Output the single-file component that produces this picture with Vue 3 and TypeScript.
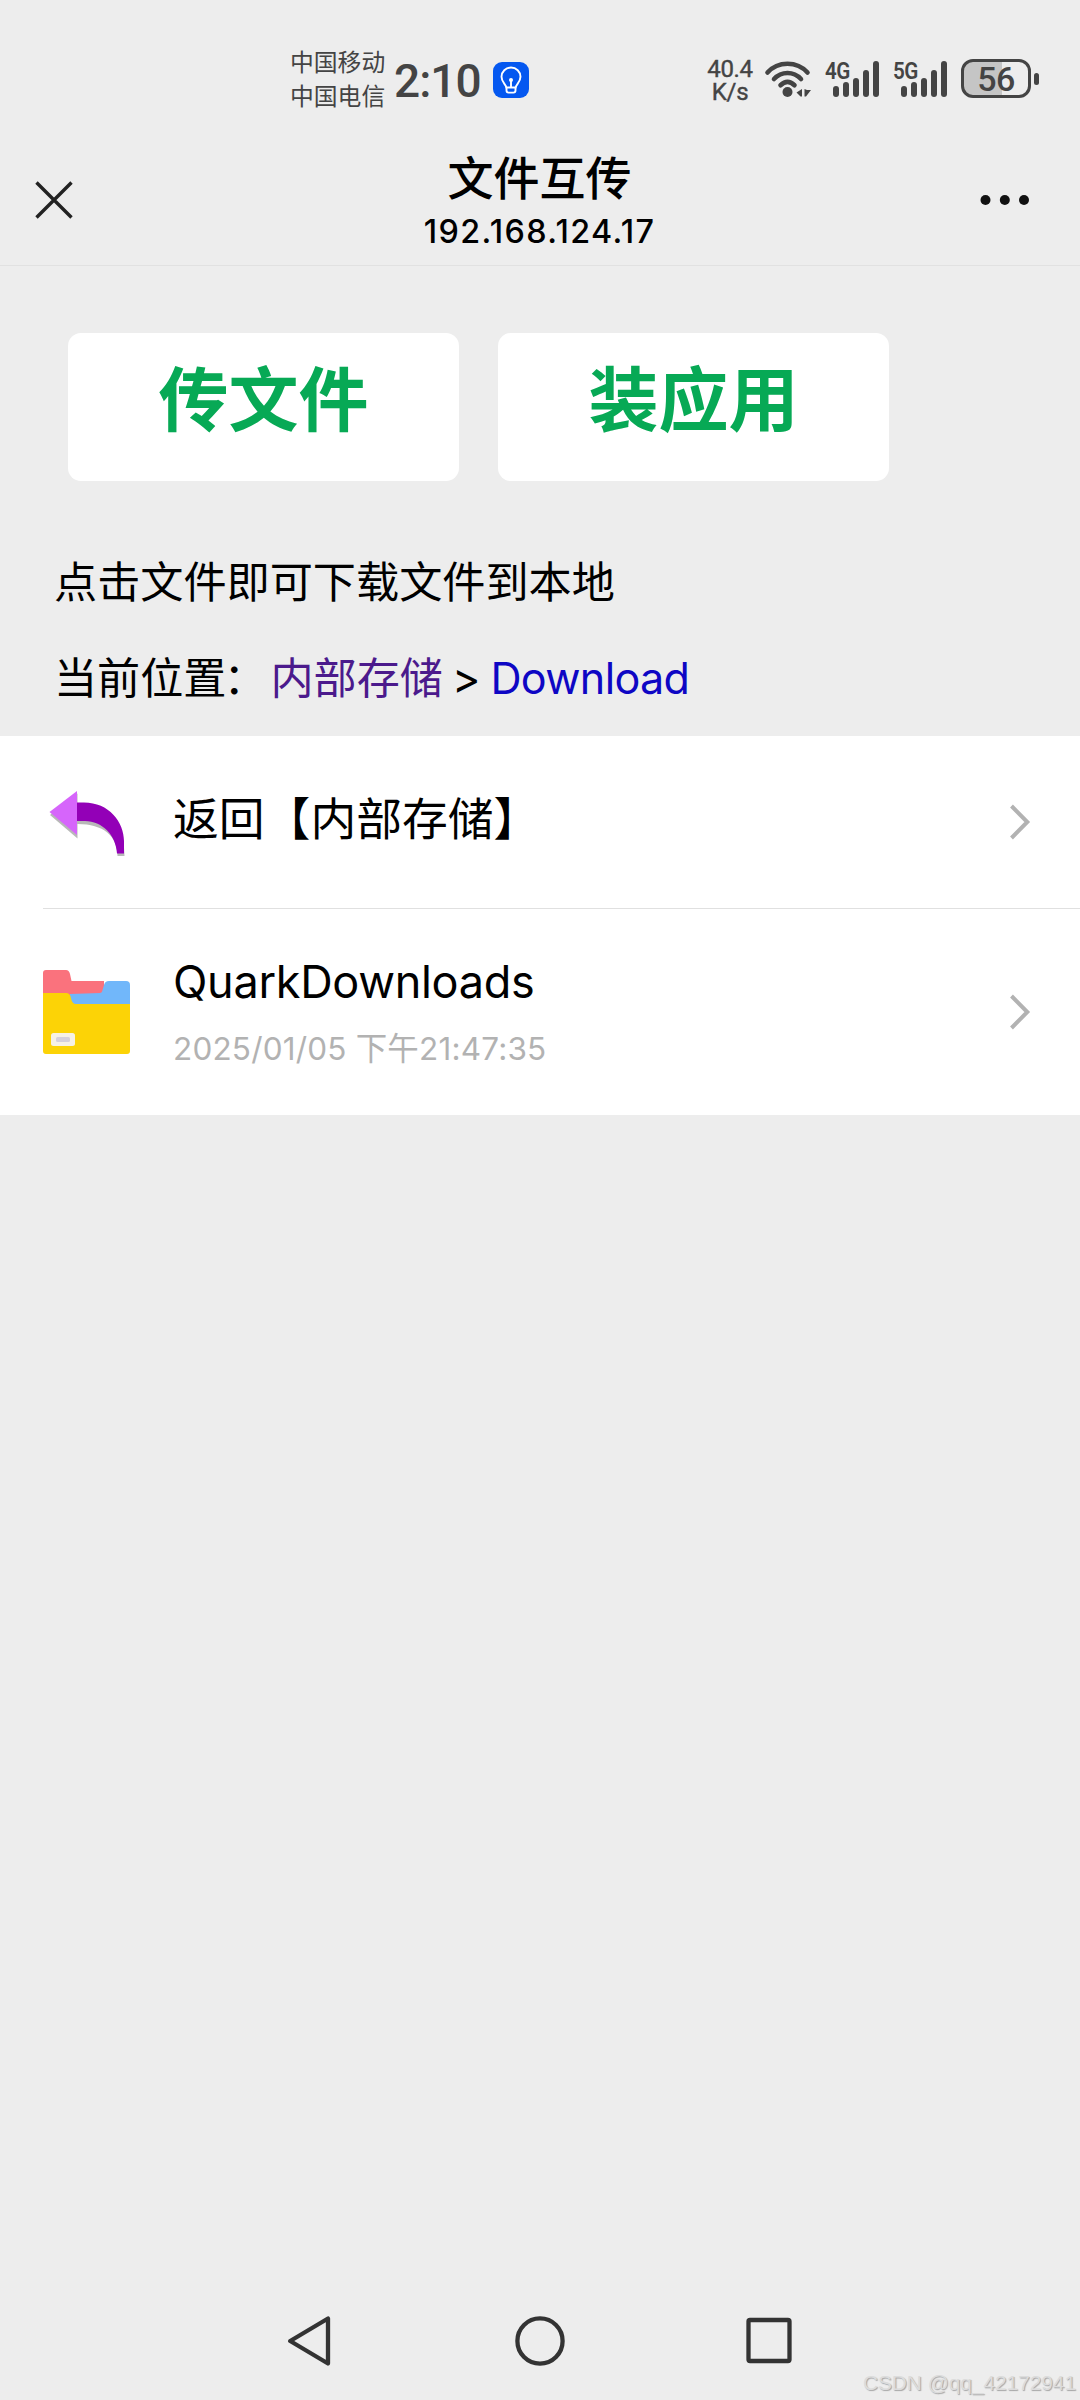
<script setup lang="ts">
interface Entry {
  id: string
  name: string
  time?: string
}

const carriers: string[] = ['中国移动', '中国电信']
const networks: string[] = ['4G', '5G']
const bars: number[] = [11, 15, 19, 27, 36]
const actions: string[] = ['传文件', '装应用']
const entries: Entry[] = [
  { id: 'back', name: '返回【内部存储】' },
  { id: 'folder', name: 'QuarkDownloads', time: '2025/01/05 下午21:47:35' },
]
</script>

<template>
  <div class="screen">
    <header class="status">
      <div class="carriers">
        <span v-for="c in carriers" :key="c">{{ c }}</span>
      </div>
      <span class="clock">2:10</span>
      <svg class="bulb" width="36" height="36" viewBox="0 0 36 36">
        <rect width="36" height="36" rx="9" fill="#0558f0" />
        <g fill="none" stroke="#fff" stroke-width="1.9" stroke-linecap="round" stroke-linejoin="round">
          <path d="M13.200 25.500c0-3-4.700-5-4.700-10.700a9.500 9.300 0 0 1 19 0c0 5.700-4.700 7.700-4.700 10.700z" />
          <path d="M13.500 26v2.600c0 1.300.9 2 2 2h5c1.100 0 2-.7 2-2V26M18 19v6" />
        </g>
        <circle cx="18" cy="18" r="2" fill="#fff" />
      </svg>
      <div class="speed"><span>40.4</span><span>K/s</span></div>
      <svg class="wifi" width="48" height="38" viewBox="0 0 48 38">
        <g fill="none" stroke="#444" stroke-width="4.600" stroke-linecap="round">
          <path d="M3.500 12.500C14 .8 33 .8 43.500 12.500" />
          <path d="M10 19c7.500-8 19.500-8 27 0" />
          <path d="M16.500 25.200c4.500-4.200 9.500-4.200 14 0" />
        </g>
        <circle cx="23.500" cy="32" r="5" fill="#444" />
        <path d="M38 29v7.500h-1.500L32.500 32.500zM40.500 29v7.500h1.500l5-6.500h-4z" fill="#444" />
      </svg>
      <div v-for="n in networks" :key="n" class="signal">
        <svg width="55" height="38" viewBox="0 0 55 38">
          <rect
            v-for="(h, i) in bars"
            :key="i"
            :x="8 + i * 10"
            :y="37 - h"
            width="6"
            :height="h"
            rx="3"
            fill="#444"
          />
        </svg>
        <span>{{ n }}</span>
      </div>
      <div class="battery"><span>56</span></div>
      <i class="nub"></i>
    </header>

    <div class="titlebar">
      <svg class="close" width="40" height="40" viewBox="0 0 40 40">
        <path d="M2.500 2.500l35 35M37.500 2.500l-35 35" stroke="#222" stroke-width="3.400" />
      </svg>
      <div class="titles">
        <h1>文件互传</h1>
        <p>192.168.124.17</p>
      </div>
      <svg class="more" width="50" height="12" viewBox="0 0 50 12">
        <circle cx="5.500" cy="6" r="5" fill="#111" />
        <circle cx="24.800" cy="6" r="5" fill="#111" />
        <circle cx="44" cy="6" r="5" fill="#111" />
      </svg>
    </div>

    <div class="actions">
      <button v-for="a in actions" :key="a" type="button">{{ a }}</button>
    </div>

    <p class="hint">点击文件即可下载文件到本地</p>
    <p class="path">
      <span class="label">当前位置<span class="colon">：</span></span><a class="visited">内部存储</a><span class="sep">&gt;</span><a class="link">Download</a>
    </p>

    <ul class="list">
      <li v-for="e in entries" :key="e.id" :class="e.id">
        <svg v-if="e.id === 'back'" class="icon" width="87" height="86" viewBox="0 0 87 86">
          <g fill="#000" opacity=".28" transform="translate(.5 2.500)">
            <path d="M6.500 33.500L34 12v45zM34 24c30-2 47 14 47 50.500h-7c0-20-14-32-40-32z" />
          </g>
          <path d="M34 23.500h7C66 23.500 81 43 81 62v12.500h-7C73 56 59 42 42 42h-8z" fill="#9300b7" />
          <path d="M6.500 33L34 12v44z" fill="#d665fb" />
        </svg>
        <svg v-else class="icon" width="87" height="86" viewBox="0 0 87 86">
          <path d="M0 4q0-3 3-3h20q3 0 4 4l1.500 7H61v20H0z" fill="#fa727d" />
          <path d="M27 25l30-1q2 0 2.500-3l1.500-5q1-4 5-4h17q4 0 4 4v27H27z" fill="#71b7fa" />
          <path d="M0 24h23q4 0 5 5 1 6 5 6h54v47q0 3-3 3H3q-3 0-3-3z" fill="#fcd306" />
          <rect x="8" y="64" width="24" height="13" rx="2.500" fill="#f6f1e6" />
          <rect x="13" y="68" width="14" height="5" rx="1.500" fill="#d5d0dc" />
        </svg>
        <div class="info">
          <span class="name">{{ e.name }}</span>
          <span v-if="e.time" class="time">{{ e.time }}</span>
        </div>
        <svg class="chevron" width="22" height="38" viewBox="0 0 22 38">
          <path d="M2.500 3l15.800 16L2.500 35" fill="none" stroke="#b2b2b2" stroke-width="4" />
        </svg>
      </li>
    </ul>

    <nav class="nav">
      <svg width="504" height="54" viewBox="0 0 504 54" fill="none" stroke="#333" stroke-width="4.300" stroke-linejoin="round">
        <path d="M40 4.500v45L2.200 27z" />
        <circle cx="252" cy="27" r="22.600" />
        <rect x="460.500" y="6" width="41" height="41" rx="1.500" />
      </svg>
    </nav>
    <span class="watermark">CSDN @qq_42172941</span>
  </div>
</template>

<style>
body {
  margin: 0;
  background: #ededed;
}
</style>

<style scoped>
.screen {
  position: relative;
  display: flex;
  flex-direction: column;
  width: 1080px;
  height: 2400px;
  overflow: hidden;
  background: #ededed;
  color: #000;
  font-family: Inter, "Noto Sans CJK SC", sans-serif;
}
p, h1, ul {
  margin: 0;
  padding: 0;
}
svg {
  display: block;
  flex: none;
}
.status {
  display: flex;
  align-items: flex-start;
  height: 140px;
  color: #444;
  white-space: nowrap;
}
.carriers {
  display: flex;
  flex-direction: column;
  width: 104px;
  margin: 44px 0 0 290px;
  font: 23.800px/34px "Noto Sans CJK SC", sans-serif;
}
.clock {
  width: 99px;
  margin-top: 55px;
  font: 500 46px/52px Roboto, sans-serif;
  letter-spacing: -1px;
}
.bulb {
  margin-top: 62px;
}
.speed {
  display: flex;
  flex-direction: column;
  align-items: center;
  width: 48px;
  margin: 58px 0 0 177px;
  font: 24px/23px Roboto, sans-serif;
  letter-spacing: -0.300px;
  -webkit-text-stroke: 0.4px #444;
}
.wifi {
  margin: 60px 0 0 10px;
}
.signal {
  position: relative;
  width: 55px;
  margin: 60px 0 0 13px;
}
.signal + .signal {
  margin-left: 13px;
}
.signal span {
  position: absolute;
  left: 0;
  top: -1px;
  font: 600 24px/24px Roboto, sans-serif;
  letter-spacing: -0.500px;
  transform: scaleX(0.86);
  transform-origin: 0 0;
}
.battery {
  box-sizing: border-box;
  width: 70px;
  height: 39px;
  margin: 59px 0 0 13px;
  border: 3px solid #444;
  border-radius: 12px;
  background: linear-gradient(90deg, #c5c5c5 38px, #ededed 38px);
  text-align: center;
  font: 500 34px/35px Roboto, sans-serif;
  letter-spacing: -0.500px;
}
.nub {
  width: 5px;
  height: 12px;
  margin: 73px 0 0 3px;
  border-radius: 2.500px;
  background: #444;
}
.titlebar {
  display: flex;
  align-items: center;
  box-sizing: border-box;
  height: 126px;
  padding: 0 50px 5px 34px;
  border-bottom: 1px solid #e1e1e1;
}
.titles {
  flex: 1;
  text-align: center;
  padding-left: 25px;
}
.titles h1 {
  font: 500 46px/54px "Noto Sans CJK SC", sans-serif;
}
.titles p {
  font-size: 32.300px;
  font-weight: 500;
  line-height: 44px;
  letter-spacing: 1.350px;
  padding-top: 8px;
}
.titles {
  padding-top: 2px;
}
.actions {
  display: flex;
  gap: 39px;
  padding: 67px 0 0 68px;
}
.actions button {
  width: 391px;
  height: 148px;
  padding: 0 0 22px;
  border: 0;
  border-radius: 13px;
  background: #fff;
  color: #07a955;
  font: 700 70px/100px "Noto Sans CJK SC", sans-serif;
}
.hint {
  margin: 69px 0 0 54px;
  font-size: 43.150px;
  line-height: 64px;
}
.path {
  display: flex;
  margin: 32px 0 0 54px;
  height: 90px;
  font-size: 43.100px;
  line-height: 64px;
}
.label {
  width: 216.500px;
  white-space: nowrap;
}
.colon {
  margin-left: -3px;
}
.visited {
  color: #4b1a8c;
}
.sep {
  margin: 0 10px 0 9px;
}
.link {
  color: #0e06c4;
  letter-spacing: -0.650px;
}
.list {
  list-style: none;
  background: #fff;
}
.list li {
  display: flex;
  align-items: center;
  box-sizing: border-box;
  margin-left: 43px;
  padding-right: 49px;
}
.back {
  height: 173px;
  border-bottom: 1px solid #e0e0e0;
}
.folder {
  height: 206px;
}
.info {
  display: flex;
  flex: 1;
  flex-direction: column;
  padding-left: 43px;
}
.name {
  font-size: 45.800px;
  line-height: 66px;
}
.back .info {
  padding-bottom: 4px;
}
.folder .name {
  font-size: 45px;
  letter-spacing: -0.300px;
}
.folder .info {
  padding-bottom: 5px;
}
.time {
  margin-top: 12px;
  color: #b2b2b2;
  font-size: 31.500px;
  line-height: 44px;
  letter-spacing: 0.180px;
}
.nav {
  display: flex;
  justify-content: center;
  margin-top: 1199px;
}
.watermark {
  position: absolute;
  right: 4px;
  bottom: 5px;
  color: #dcdcdc;
  font: 20.800px/24px "Liberation Sans", sans-serif;
  text-shadow: 1px 1px 1px #a5a5a5;
}
</style>
